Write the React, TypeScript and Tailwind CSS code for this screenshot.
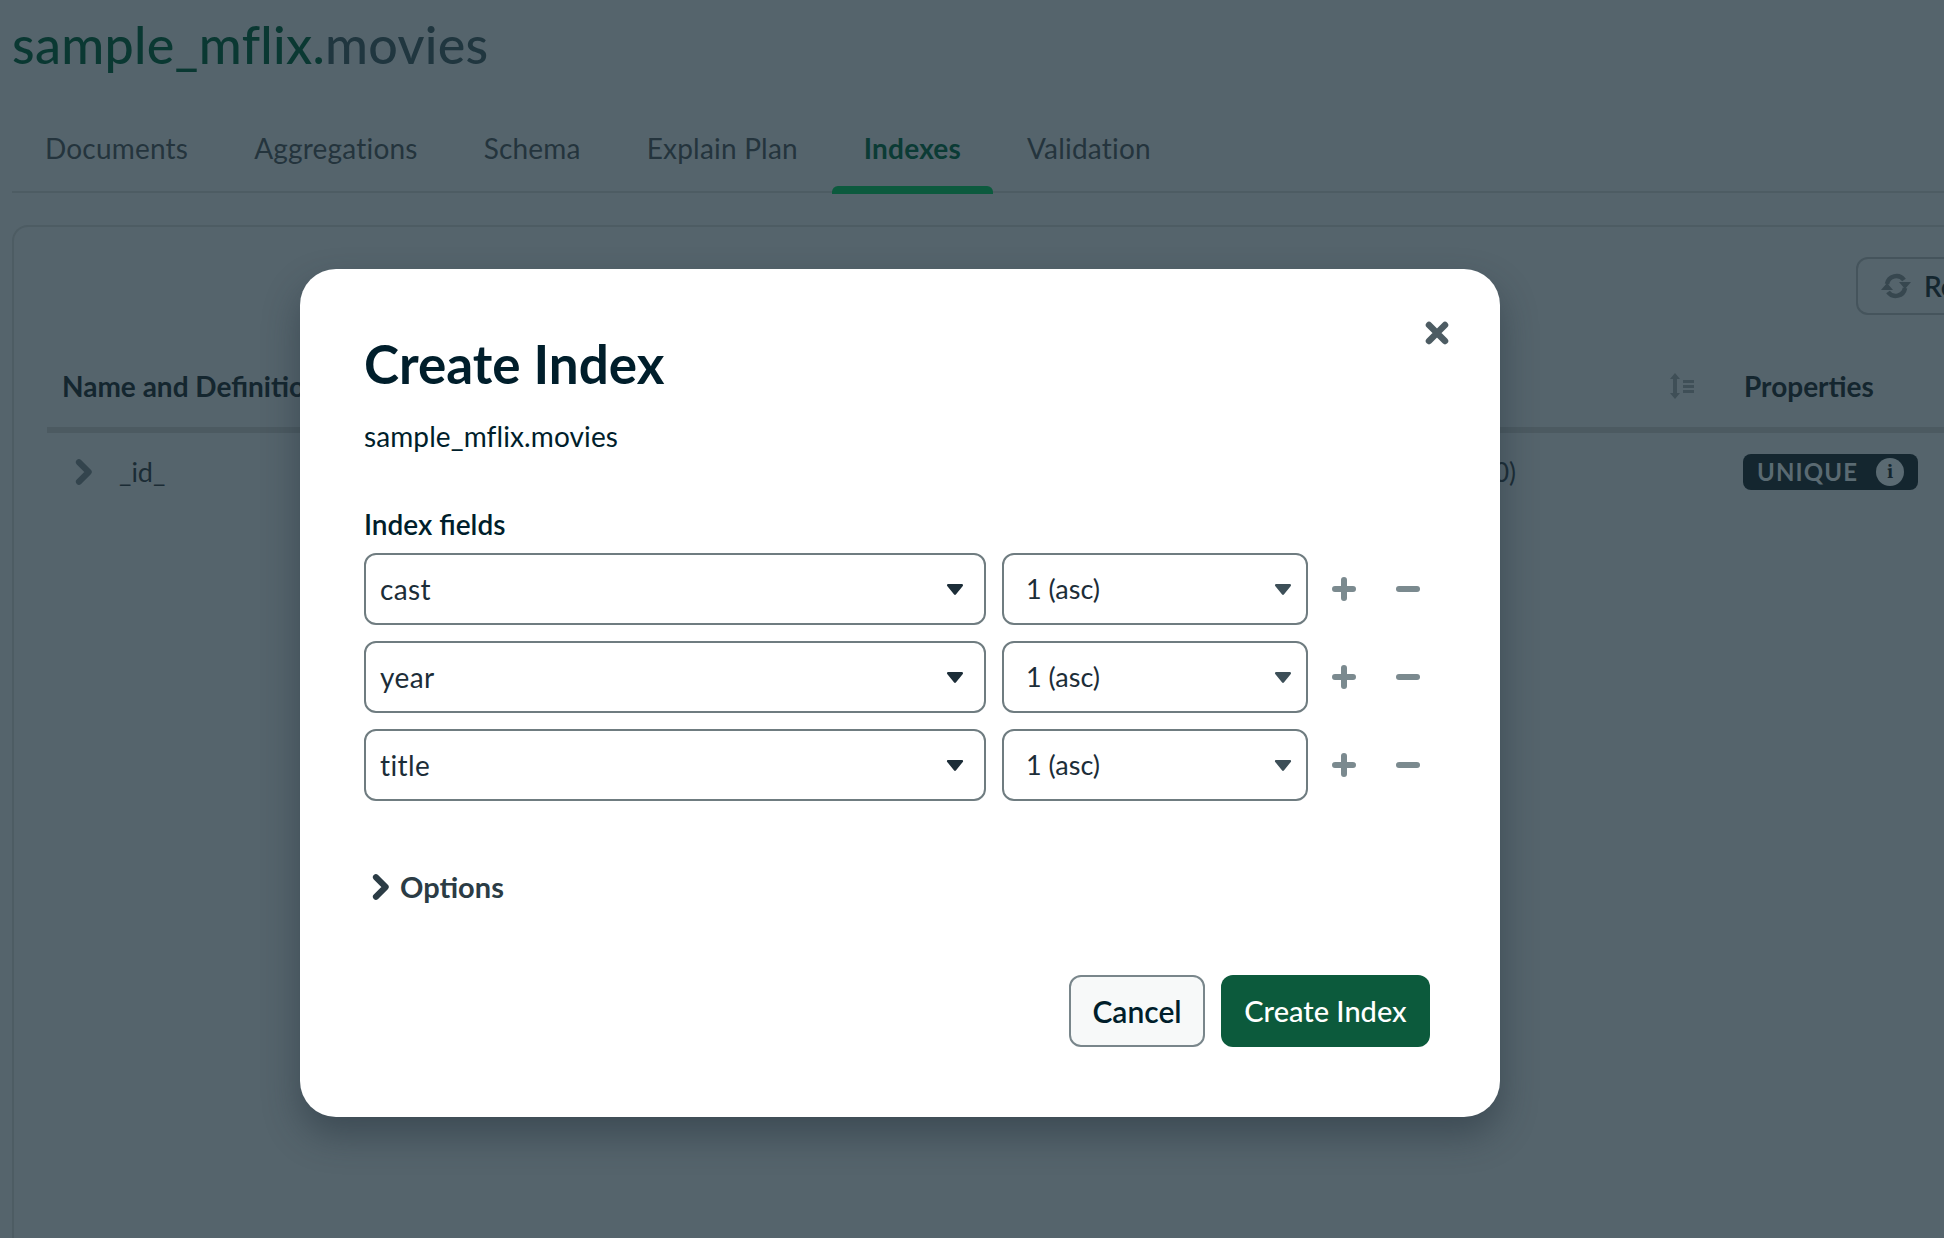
import React from "react";

const font = { fontFamily: '"Lato", "Noto Sans", sans-serif' };

function Caret({ className }: { className: string }) {
  return (
    <svg viewBox="0 0 16 12" className={className} fill="currentColor">
      <path d="M1.6 1h12.8c.9 0 1.4 1 .8 1.7L8.8 10.6c-.4.5-1.2.5-1.6 0L.8 2.7C.2 2 .7 1 1.6 1z" />
    </svg>
  );
}

function Chevron({ className }: { className: string }) {
  return (
    <svg viewBox="0 0 20 28" className={className} fill="none" stroke="currentColor" strokeWidth="6.5" strokeLinecap="round" strokeLinejoin="round">
      <path d="M4 3.500l10.500 10.500L4 24.500" />
    </svg>
  );
}

function Row({ field }: { field: string }) {
  return (
    <div className="flex items-center">
      <div className="flex h-[72px] w-[622px] items-center justify-between rounded-[12px] border-2 border-[#6f7c80] pl-[14px] pr-[20px]">
        <span className="text-[28px] tracking-[0.4px] text-[#1c2d38]">{field}</span>
        <Caret className="h-[13px] w-[18px] text-[#1c2d38]" />
      </div>
      <div className="ml-[16px] flex h-[72px] w-[306px] items-center justify-between rounded-[12px] border-2 border-[#6f7c80] pl-[22px] pr-[14px]">
        <span className="text-[27px] text-[#1c2d38]">1 (asc)</span>
        <Caret className="h-[13px] w-[18px] text-[#3d4f58]" />
      </div>
      <svg viewBox="0 0 24 24" className="ml-[24px] h-[24px] w-[24px] text-[#7b8a8f]" fill="none" stroke="currentColor" strokeWidth="6" strokeLinecap="round">
        <path d="M12 3v18M3 12h18" />
      </svg>
      <svg viewBox="0 0 24 24" className="ml-[40px] h-[24px] w-[24px] text-[#7b8a8f]" fill="none" stroke="currentColor" strokeWidth="6" strokeLinecap="round">
        <path d="M3 12h18" />
      </svg>
    </div>
  );
}

const tabs = ["Documents", "Aggregations", "Schema", "Explain Plan", "Indexes", "Validation"];

export default function App() {
  return (
    <div style={font} className="relative h-[1238px] w-[1944px] overflow-hidden bg-[#55646c]">
      <div className="pl-[12px]">
        <h1 className="pt-[12px] text-[52px] font-medium leading-[64px] tracking-[0.3px] text-[#20363f]">
          <span className="text-[#0a3832]">sample_mflix.</span>movies
        </h1>
        <nav className="mt-[38px] flex h-[79px] border-b-2 border-[#4d5c63] pl-[21px]">
          {tabs.map((t) => {
            const active = t === "Indexes";
            return (
              <div key={t} className="relative mr-[42px] flex h-[79px] items-center px-[12px] pb-[12px]">
                <span className={`text-[28px] tracking-[0.2px] ${active ? "font-bold text-[#0b3b35]" : "text-[#24343d]"}`}>{t}</span>
                {active && <div className="absolute -bottom-[1px] -left-[20px] -right-[20px] h-[8px] rounded-t-[6px] bg-[#0c5a3e]" />}
              </div>
            );
          })}
        </nav>
        <section className="mt-[32px] h-[1100px] rounded-tl-[16px] border-l-2 border-t-2 border-[#4d5c63] pl-[33px]">
          <div className="flex justify-end pt-[30px]">
            <div className="-mr-[112px] flex h-[58px] w-[200px] shrink-0 items-center gap-[12px] rounded-[12px] border-2 border-[#45545c] pl-[22px] text-[28px] font-semibold text-[#14262f]">
              <svg viewBox="0 0 32 28" className="h-[28px] w-[32px] shrink-0 text-[#37474f]" fill="none" stroke="currentColor" strokeWidth="4.5">
                <path d="M7 12a9.500 9.500 0 0 1 17-4" />
                <path d="M25 16a9.500 9.500 0 0 1-17 4" />
                <path d="M19 10h12l-6 7zM1 18h12l-6-7z" fill="currentColor" stroke="none" />
              </svg>
              Refresh
            </div>
          </div>
          <div className="mt-[40px] flex h-[78px] items-center border-b-[6px] border-[#4c5a61] pb-[10px]">
            <span className="ml-[15px] flex-1 text-[28px] font-bold text-[#14262f]">Name and Definition</span>
            <svg viewBox="0 0 28 28" className="mr-[47px] h-[28px] w-[28px] text-[#3f4f57]" fill="currentColor">
              <path d="M6 1l5 6H8v14h3l-5 6-5-6h3V7H1z" />
              <path d="M14 8h11v3H14zM14 13h11v3H14zM14 18h11v3H14z" />
            </svg>
            <span className="w-[200px] text-[28px] font-bold text-[#14262f]">Properties</span>
          </div>
          <div className="flex h-[78px] items-center">
            <Chevron className="ml-[28px] h-[26px] w-[19px] text-[#33444d]" />
            <span className="ml-[25px] flex-1 text-[27px] text-[#1b2c35]">_id_</span>
            <span className="mr-[227px] text-[26px] text-[#1b2c35]">(0)</span>
            <span className="mr-[26px] flex h-[36px] w-[175px] shrink-0 items-center rounded-[8px] bg-[#14262f] pl-[14px] text-[24px] font-bold tracking-[1.1px] text-[#5a6a72]">
              UNIQUE
              <span className="ml-[18px] flex h-[28px] w-[28px] items-center justify-center rounded-full bg-[#5a6a72] font-serif text-[20px] font-bold leading-none tracking-normal text-[#14262f]">i</span>
            </span>
          </div>
        </section>
      </div>

      <div className="absolute inset-0 pl-[300px] pt-[269px]">
        <div className="relative h-[848px] w-[1200px] rounded-[36px] bg-white pl-[64px] pt-[63px] shadow-[0_18px_36px_rgba(30,45,55,0.45)]">
          <svg viewBox="0 0 24 24" className="absolute right-[51px] top-[52px] h-[24px] w-[24px] text-[#4d5c63]" fill="none" stroke="currentColor" strokeWidth="6.500" strokeLinecap="round">
            <path d="M4 4l16 16M20 4L4 20" />
          </svg>
          <h2 className="text-[53px] font-bold leading-[64px] text-[#001e2b]">Create Index</h2>
          <p className="mt-[20px] text-[28px] tracking-[0.1px] leading-[40px] text-[#001e2b]">sample_mflix.movies</p>
          <p className="mt-[48px] text-[28px] font-semibold leading-[40px] text-[#001e2b]">Index fields</p>
          <div className="mt-[9px] flex flex-col gap-[16px]">
            <Row field="cast" />
            <Row field="year" />
            <Row field="title" />
          </div>
          <div className="mt-[66px] flex h-[40px] items-center pl-[8px] text-[29px] font-bold text-[#2b3c45]">
            <Chevron className="h-[26px] w-[19px] text-[#2b3c45]" />
            <span className="ml-[9px]">Options</span>
          </div>
          <div className="mt-[68px] flex justify-end pr-[70px]">
            <button className="h-[72px] w-[136px] rounded-[12px] border-2 border-[#79868b] bg-[#f7f9f9] text-[30px] font-semibold text-[#001e2b]">Cancel</button>
            <button className="ml-[16px] h-[72px] w-[209px] rounded-[12px] bg-[#0c5a3c] text-[29px] font-medium text-white">Create Index</button>
          </div>
        </div>
      </div>
    </div>
  );
}
